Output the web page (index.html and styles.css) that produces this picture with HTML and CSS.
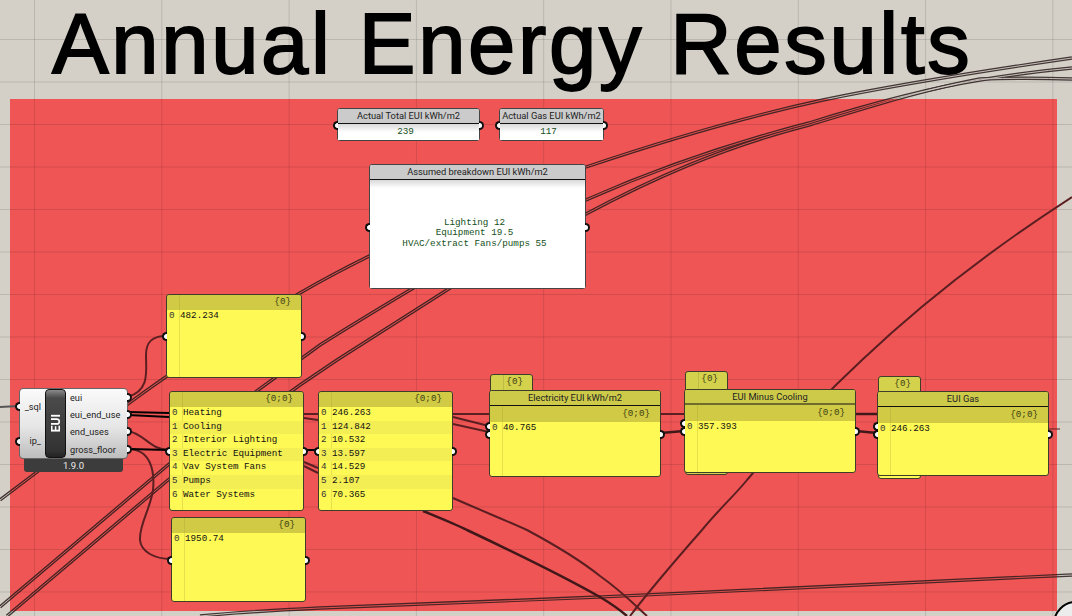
FILE: index.html
```html
<!DOCTYPE html>
<html lang="en">
<head>
    <meta charset="UTF-8">
    <meta name="viewport" content="width=device-width, initial-scale=1.0">
    <title>Annual Energy Results</title>
    <link rel="stylesheet" href="styles.css">
</head>
<body>
    <div class="canvas">
        <div class="group"></div>
        <div class="grid"></div>
        <h1 class="title">Annual Energy Results</h1>

        <svg class="wires" width="1072" height="616" viewBox="0 0 1072 616">
            <defs>
                <g id="hollow">
                    <path d="M0 500 L37 472 L128 404 C190 358 250 322 300 293 C360 258 470 205 586 167 C660 142 740 118 823 100 C900 84 990 70 1072 58"/>
                    <path d="M0 607 L168 465 L258 390 L320 345 C350 326 380 308 410 290 C470 255 530 226 586 200 C640 176 720 146 809 123 C870 104 930 88 980 80 C1010 75 1040 71 1072 68"/>
                    <path d="M7 616 L168 480 L300 385 L337 360 L447 290 C490 262 540 238 586 214 C650 180 720 148 809 125 C860 110 920 90 980 79 C1010 78 1040 78 1072 79"/>
                    <path d="M200 616 C240 612 280 610 320 608 C420 604 510 601 600 597 C760 590 920 582 1072 575"/>
                </g>
                <mask id="gap" maskUnits="userSpaceOnUse" x="0" y="0" width="1072" height="616">
                    <rect width="1072" height="616" fill="white"/>
                    <use href="#hollow" fill="none" stroke="black" stroke-width="0.9"/>
                </mask>
            </defs>
            <g mask="url(#gap)">
                <use href="#hollow" class="wire-double"/>
            </g>
            <path class="wire" d="M630 616 C650 590 680 555 702 530 C720 508 735 495 747 480 C790 430 830 390 862 360 C920 305 990 250 1072 197"/>
            <path class="wire" d="M453 498 C480 510 505 520 527 530 C555 545 580 560 600 576 C620 590 635 605 647 616"/>
            <path class="wire wire-thick" d="M423 511 C440 518 455 524 467 530 C520 555 570 580 600 597 C610 603 620 610 627 616"/>
            <path class="wire" d="M128 397 C150 390 146 372 146 355 C146 342 152 336 166 336"/>
            <path class="wire" d="M128 431 C145 434 150 450 169 450"/>
            <path class="wire" d="M128 449 C150 449 155 470 153 490 C150 510 139 525 140 540 C141 552 155 559 171 559"/>
            <path class="wire-black" d="M128 449 L169 450"/>
            <path class="wire-black" d="M128 412 L169 413"/>
            <path class="wire-black" d="M128 415 L169 417"/>
            <path class="wire-black" d="M304 450 L318 450"/>
            <path class="wire" d="M304 414 L318 414"/>
            <path class="wire" d="M304 418 L318 420"/>
            <path class="wire" d="M304 462 L318 468"/>
            <path class="wire" d="M304 466 L318 473"/>
            <path class="wire" d="M453 414 L489 414"/>
            <path class="wire" d="M453 417 L489 426"/>
            <path class="wire" d="M453 424 L489 432"/>
            <path class="wire wire-thick" d="M661 433 L684 431"/>
            <path class="wire" d="M661 414 L684 414"/>
            <path class="wire wire-thick" d="M856 414 L877 414"/>
            <path class="wire wire-thick" d="M856 431 L877 433"/>
            <path class="wire-thin" d="M1049 429 L1060 429"/>
            <path class="wire-grey" d="M0 407 L19 406"/>
            <circle class="badge" cx="1076" cy="624" r="22"/>
        </svg>

        <!-- EUI component -->
        <div class="comp">
            <div class="comp-body">
                <div class="comp-inputs">
                    <span>_sql</span>
                    <span>ip_</span>
                </div>
                <div class="comp-name"><span>EUI</span></div>
                <div class="comp-outputs">
                    <span>eui</span>
                    <span>eui_end_use</span>
                    <span>end_uses</span>
                    <span>gross_floor</span>
                </div>
                <i class="port port-in pin-sql"></i>
                <i class="port port-in pin-ip"></i>
                <i class="port port-out pin-eui"></i>
                <i class="port port-out pin-use"></i>
                <i class="port port-out pin-uses"></i>
                <i class="port port-out pin-floor"></i>
            </div>
            <div class="comp-version">1.9.0</div>
        </div>

        <!-- text panels -->
        <div class="note note-total">
            <div class="note-title">Actual Total EUI kWh/m2</div>
            <div class="note-text">239</div>
            <i class="port port-in port-mid"></i>
            <i class="port port-out port-mid"></i>
        </div>
        <div class="note note-gas">
            <div class="note-title">Actual Gas EUI kWh/m2</div>
            <div class="note-text">117</div>
            <i class="port port-in port-mid"></i>
            <i class="port port-out port-mid"></i>
        </div>
        <div class="note note-breakdown">
            <div class="note-title">Assumed breakdown EUI kWh/m2</div>
            <div class="note-text">Lighting 12<br>Equipment 19.5<br>HVAC/extract Fans/pumps 55</div>
            <i class="port port-in port-mid"></i>
            <i class="port port-out port-mid"></i>
        </div>

        <!-- data panels -->
        <div class="panel panel-eui">
            <div class="panel-path">{0}</div>
            <div class="rows">
                <div class="row"><span class="idx">0</span><span>482.234</span></div>
            </div>
            <i class="port port-in port-mid"></i>
            <i class="port port-out port-mid"></i>
        </div>

        <div class="panel panel-names">
            <div class="panel-path">{0;0}</div>
            <div class="rows">
                <div class="row"><span class="idx">0</span><span>Heating</span></div>
                <div class="row"><span class="idx">1</span><span>Cooling</span></div>
                <div class="row"><span class="idx">2</span><span>Interior Lighting</span></div>
                <div class="row"><span class="idx">3</span><span>Electric Equipment</span></div>
                <div class="row"><span class="idx">4</span><span>Vav System Fans</span></div>
                <div class="row"><span class="idx">5</span><span>Pumps</span></div>
                <div class="row"><span class="idx">6</span><span>Water Systems</span></div>
            </div>
            <i class="port port-in port-mid"></i>
            <i class="port port-out port-mid"></i>
        </div>

        <div class="panel panel-floor">
            <div class="panel-path">{0}</div>
            <div class="rows">
                <div class="row"><span class="idx">0</span><span>1950.74</span></div>
            </div>
            <i class="port port-in port-mid"></i>
            <i class="port port-out port-mid"></i>
        </div>

        <div class="panel panel-values">
            <div class="panel-path">{0;0}</div>
            <div class="rows">
                <div class="row"><span class="idx">0</span><span>246.263</span></div>
                <div class="row"><span class="idx">1</span><span>124.842</span></div>
                <div class="row"><span class="idx">2</span><span>10.532</span></div>
                <div class="row"><span class="idx">3</span><span>13.597</span></div>
                <div class="row"><span class="idx">4</span><span>14.529</span></div>
                <div class="row"><span class="idx">5</span><span>2.107</span></div>
                <div class="row"><span class="idx">6</span><span>70.365</span></div>
            </div>
            <i class="port port-in port-mid"></i>
            <i class="port port-out port-mid"></i>
        </div>

        <!-- small panels peeking out behind the titled ones -->
        <div class="tab tab-elec"><span>{0}</span></div>
        <div class="tab tab-cool"><span>{0}</span></div>
        <div class="tab tab-gas"><span>{0}</span></div>

        <div class="panel panel-titled panel-elec">
            <div class="panel-title">Electricity EUI kWh/m2</div>
            <div class="panel-path">{0;0}</div>
            <div class="rows">
                <div class="row"><span class="idx">0</span><span>40.765</span></div>
            </div>
            <i class="port port-in port-upper"></i>
            <i class="port port-in port-mid"></i>
            <i class="port port-out port-mid"></i>
        </div>

        <div class="panel panel-titled panel-cool">
            <div class="panel-title">EUI Minus Cooling</div>
            <div class="panel-path">{0;0}</div>
            <div class="rows">
                <div class="row"><span class="idx">0</span><span>357.393</span></div>
            </div>
            <i class="port port-in port-upper"></i>
            <i class="port port-in port-mid"></i>
            <i class="port port-out port-mid"></i>
        </div>

        <div class="panel panel-titled panel-gasuse">
            <div class="panel-title">EUI Gas</div>
            <div class="panel-path">{0;0}</div>
            <div class="rows">
                <div class="row"><span class="idx">0</span><span>246.263</span></div>
            </div>
            <i class="port port-in port-upper"></i>
            <i class="port port-in port-mid"></i>
            <i class="port port-out port-mid"></i>
        </div>
    </div>
</body>
</html>
```

FILE: styles.css
```css
* {
    box-sizing: border-box;
}

body {
    margin: 0;
    background: #d4d0c8;
    overflow: hidden;
}

.canvas {
    position: relative;
    width: 1072px;
    height: 616px;
    overflow: hidden;
    background: #d4d0c8;
    font-family: Roboto, "Noto Sans", sans-serif;
}

.group {
    position: absolute;
    left: 10px;
    top: 99px;
    width: 1047px;
    height: 512px;
    background: #f05555;
}

.grid {
    position: absolute;
    inset: 0;
    background-image:
        linear-gradient(to right, rgba(0, 0, 0, 0.12) 1px, transparent 1px),
        linear-gradient(to bottom, rgba(0, 0, 0, 0.12) 1px, transparent 1px);
    background-size: 127.3px 100%, 100% 42.5px;
    background-position: 34px 0, 0 39px;
}

.title {
    position: absolute;
    left: 52px;
    top: 0;
    margin: 0;
    font-family: "Liberation Sans", Arial, sans-serif;
    font-size: 85px;
    font-weight: 400;
    letter-spacing: 2.65px;
    line-height: 88px;
    color: #000;
    -webkit-text-stroke: 1.8px #000;
    white-space: nowrap;
}

.wires {
    position: absolute;
    left: 0;
    top: 0;
}

.wire-double {
    fill: none;
    stroke: #2a1c1c;
    stroke-width: 3.4;
    opacity: 0.85;
}

.wire {
    fill: none;
    stroke: #5b1f22;
    stroke-width: 2;
}

.wire-thick {
    stroke: #41181a;
    stroke-width: 2.5;
}

.wire-thin {
    fill: none;
    stroke: #5b1f22;
    stroke-width: 1;
}

.wire-black {
    fill: none;
    stroke: #000;
    stroke-width: 2;
}

.wire-grey {
    fill: none;
    stroke: #555;
    stroke-width: 2;
}

.badge {
    fill: #ececec;
    stroke: #000;
    stroke-width: 2;
}

/* ports */
.port {
    position: absolute;
    display: block;
    width: 5px;
    height: 9px;
    background: #fff;
    border: 2px solid #111;
}

.port-in {
    right: 100%;
    border-right: none;
    border-radius: 5px 0 0 5px;
}

.port-out {
    left: 100%;
    border-left: none;
    border-radius: 0 5px 5px 0;
}

.port-mid {
    top: calc(50% - 4px);
}

.port-upper {
    top: calc(50% - 12px);
}

/* EUI component */
.comp {
    position: absolute;
    left: 19px;
    top: 388px;
    width: 109px;
}

.comp-body {
    position: relative;
    display: flex;
    height: 71px;
    background: linear-gradient(#fafafa, #e6e6e6 55%, #bdbdbd);
    border: 1px solid #666;
    border-radius: 4px;
    font-size: 9.2px;
    color: #222;
}

.comp-inputs {
    display: flex;
    flex-direction: column;
    width: 25px;
    padding: 9px 4px 0 0;
    text-align: right;
    gap: 17px;
    line-height: 17px;
}

.comp-name {
    display: flex;
    align-items: center;
    justify-content: center;
    width: 21px;
    height: 69px;
    background: linear-gradient(#8a8a8a, #4a4a4a 12%, #333 90%, #222);
    border: 1px solid #111;
    border-radius: 4px;
    color: #fff;
    font-size: 12px;
    font-weight: 700;
}

.comp-name span {
    writing-mode: vertical-rl;
    transform: rotate(180deg);
}

.comp-outputs {
    display: flex;
    flex-direction: column;
    padding: 0 0 0 4px;
    line-height: 17.2px;
    white-space: nowrap;
}

.pin-sql { top: 13px; }
.pin-ip { top: 48px; }
.pin-eui { top: 4px; }
.pin-use { top: 21px; }
.pin-uses { top: 38px; }
.pin-floor { top: 56px; }

.comp-version {
    width: 99px;
    height: 13px;
    margin-left: 5px;
    background: #3c3c3c;
    border-radius: 0 0 3px 3px;
    color: #eee;
    font-size: 9.5px;
    line-height: 13px;
    text-align: center;
}

/* white text panels */
.note {
    position: absolute;
    display: flex;
    flex-direction: column;
    background: #fff;
    border: 1px solid #444;
    border-radius: 3px;
}

.note-total {
    left: 337px;
    top: 108px;
    width: 143px;
    height: 33px;
}

.note-gas {
    left: 499px;
    top: 108px;
    width: 105px;
    height: 33px;
}

.note-breakdown {
    left: 369px;
    top: 164px;
    width: 217px;
    height: 125px;
}

.note-title {
    height: 15px;
    background: #cbcbcb;
    border-bottom: 1px solid #111;
    border-radius: 2px 2px 0 0;
    color: #222;
    font-size: 9.3px;
    line-height: 14px;
    text-align: center;
    white-space: nowrap;
}

.note-text {
    display: flex;
    flex: 1;
    align-items: center;
    justify-content: center;
    padding-right: 6px;
    background: linear-gradient(#d8d8d8, #fff 8px);
    color: #14501a;
    font-family: "Liberation Mono", monospace;
    font-size: 9.25px;
    line-height: 10.4px;
    text-align: center;
}

.note-breakdown .note-text {
    display: block;
    padding-top: 38px;
}

/* yellow data panels */
.panel {
    position: absolute;
    display: flex;
    flex-direction: column;
    background: #fff955 linear-gradient(to right, transparent 12px, rgba(0, 0, 0, 0.1) 12px, rgba(0, 0, 0, 0.1) 13px, transparent 13px);
    border: 1px solid #3d3d2a;
    border-radius: 3px;
    font-family: "Liberation Mono", monospace;
    font-size: 9.25px;
    color: #111;
}

.panel-eui {
    left: 166px;
    top: 294px;
    width: 136px;
    height: 84px;
}

.panel-names {
    left: 169px;
    top: 391px;
    width: 135px;
    height: 120px;
}

.panel-floor {
    left: 171px;
    top: 517px;
    width: 135px;
    height: 85px;
}

.panel-values {
    left: 318px;
    top: 391px;
    width: 135px;
    height: 120px;
}

.panel-elec {
    left: 489px;
    top: 390px;
    width: 172px;
    height: 87px;
}

.panel-cool {
    left: 684px;
    top: 389px;
    width: 172px;
    height: 84px;
}

.panel-gasuse {
    left: 877px;
    top: 391px;
    width: 172px;
    height: 85px;
}

.panel-path {
    height: 15px;
    padding-right: 10px;
    background: rgba(150, 145, 50, 0.45);
    border-radius: 2px 2px 0 0;
    color: #3c3c14;
    font-size: 9.25px;
    line-height: 14px;
    text-align: right;
}

.panel-title {
    height: 15px;
    background: #cdca4a;
    border-bottom: 1px solid #111;
    border-radius: 2px 2px 0 0;
    color: #222;
    font-family: Roboto, "Noto Sans", sans-serif;
    font-size: 9.3px;
    line-height: 14px;
    text-align: center;
}

.panel-cool .panel-title {
    border-bottom: 2px solid #6f6c2c;
}

.panel-titled .panel-path {
    height: 16px;
    padding-top: 1px;
    border-radius: 0;
}

.rows {
    display: flex;
    flex-direction: column;
}

.row {
    display: flex;
    height: 13.6px;
    line-height: 12px;
    white-space: nowrap;
}

.row:nth-child(even) {
    background: #f4ee55;
}

.idx {
    width: 13px;
    padding-left: 2px;
    color: #333;
}

.tab {
    position: absolute;
    width: 43px;
    background: #d4d14c linear-gradient(to right, transparent 12px, rgba(0, 0, 0, 0.1) 12px, rgba(0, 0, 0, 0.1) 13px, transparent 13px);
    border: 1px solid #3d3d2a;
    border-radius: 3px;
    color: #3c3c14;
    font-family: "Liberation Mono", monospace;
    font-size: 9.25px;
    line-height: 13px;
    text-align: right;
    padding-right: 9px;
}

.tab-elec {
    left: 490px;
    top: 374px;
    height: 20px;
}

.tab-cool {
    left: 685px;
    top: 371px;
    height: 104px;
    background-color: #d4d14c;
}

.tab-gas {
    left: 878px;
    top: 376px;
    height: 103px;
    background-image: linear-gradient(#d4d14c 18px, #fff955 18px);
}
```
